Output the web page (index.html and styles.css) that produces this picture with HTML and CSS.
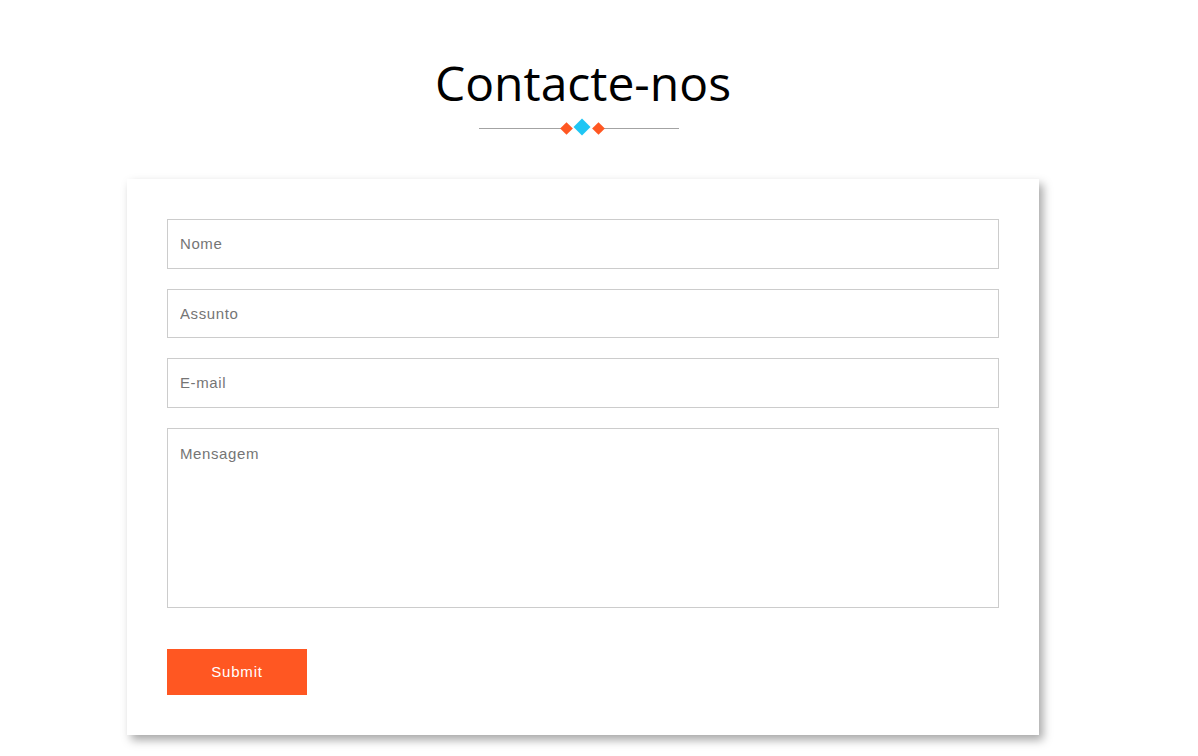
FILE: index.html
```html
<!DOCTYPE html>
<html lang="pt">
<head>
<meta charset="utf-8">
<title>Contacte-nos</title>
<link rel="stylesheet" href="styles.css">
</head>
<body>
<main class="page">
  <header class="heading">
    <h1 class="title">Contacte-nos</h1>
    <div class="divider">
      <span class="line line-left"></span>
      <span class="diamonds">
        <span class="dia dia-orange"></span>
        <span class="dia dia-blue"></span>
        <span class="dia dia-orange"></span>
      </span>
      <span class="line line-right"></span>
    </div>
  </header>
  <form class="card">
    <input class="field" type="text" placeholder="Nome">
    <input class="field" type="text" placeholder="Assunto">
    <input class="field" type="email" placeholder="E-mail">
    <textarea class="field area" placeholder="Mensagem"></textarea>
    <button class="submit" type="button">Submit</button>
  </form>
</main>
</body>
</html>
```

FILE: styles.css
```css
html, body {
  margin: 0;
  padding: 0;
  background: #fff;
}

.page {
  width: 1166px;
  min-height: 756px;
  box-sizing: border-box;
  display: flex;
  flex-direction: column;
  align-items: center;
  padding-top: 52px;
  padding-bottom: 21px;
}

.heading {
  display: flex;
  flex-direction: column;
  align-items: center;
}

.title {
  margin: 0;
  font-family: "Open Sans", sans-serif;
  font-weight: 400;
  font-size: 48px;
  line-height: 62px;
  color: #000;
}

.divider {
  display: flex;
  align-items: center;
  width: 200px;
  height: 20px;
  margin-top: 4px;
  margin-right: 8px;
}

.line {
  height: 1px;
  background: #a3a3a3;
}

.line-left {
  width: 83px;
}

.line-right {
  flex: 1;
}

.diamonds {
  display: flex;
  align-items: center;
}

.dia {
  display: block;
  transform: rotate(45deg);
}

.dia-orange {
  width: 9px;
  height: 9px;
  background: #ff5722;
}

.dia-blue {
  width: 12px;
  height: 12px;
  background: #1fc6f4;
  margin: -2px 5.5px 0;
}

.card {
  margin-top: 41px;
  width: 912px;
  box-sizing: border-box;
  padding: 40px;
  background: #fff;
  box-shadow: 4px 5px 9px rgba(0, 0, 0, 0.35);
  display: flex;
  flex-direction: column;
  align-items: flex-start;
}

.field {
  display: block;
  width: 100%;
  height: 49.5px;
  box-sizing: border-box;
  margin: 0 0 20px;
  padding: 0 12px;
  border: 1px solid #cccccc;
  border-radius: 0;
  background: #fff;
  font-family: "Liberation Sans", Arial, sans-serif;
  font-size: 15px;
  letter-spacing: 0.6px;
  color: #333;
  outline: none;
}

.field::placeholder {
  color: #757575;
  opacity: 1;
}

.area {
  height: 180px;
  padding-top: 16px;
  resize: none;
  margin-bottom: 41px;
}

.submit {
  width: 140px;
  height: 46px;
  border: 0;
  border-radius: 0;
  background: #ff5722;
  color: #fff;
  font-family: "Liberation Sans", Arial, sans-serif;
  font-size: 15px;
  letter-spacing: 0.8px;
  cursor: pointer;
}
```
